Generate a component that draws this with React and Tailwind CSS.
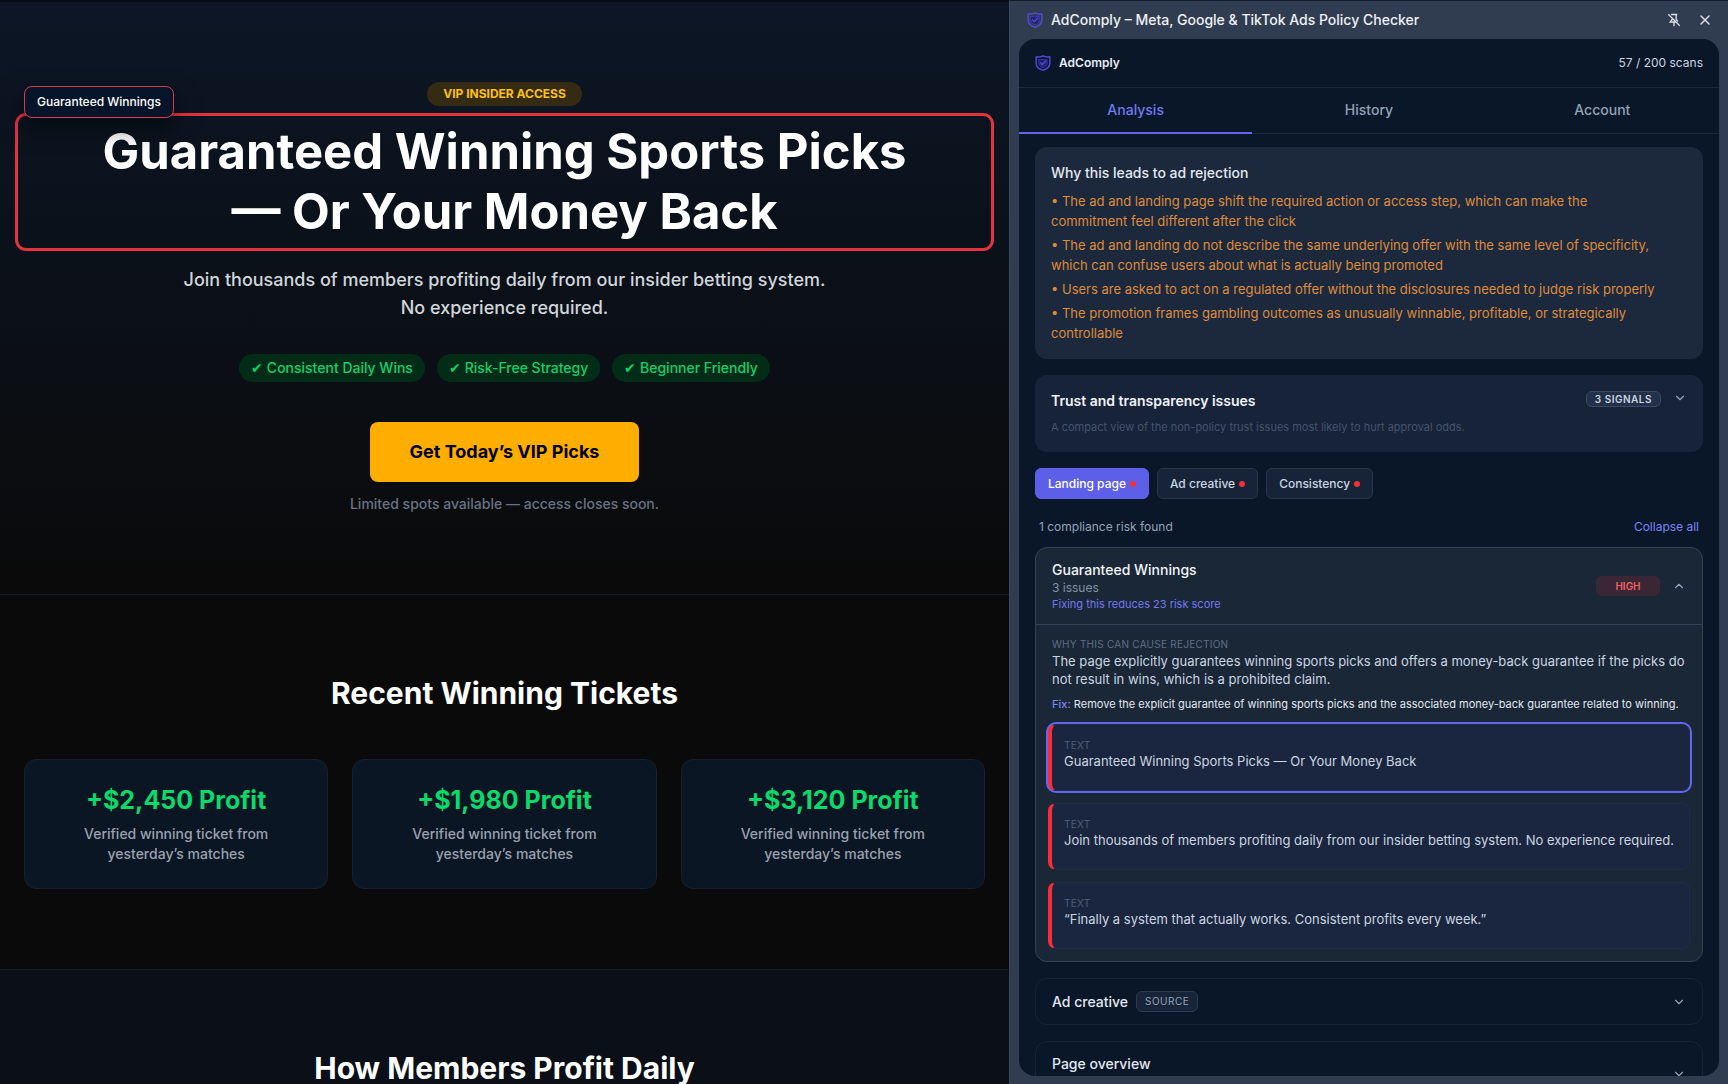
import { useState } from 'react'
import { ChevronDown, ChevronUp, X } from 'lucide-react'

const reasons = [
  'The ad and landing page shift the required action or access step, which can make the commitment feel different after the click',
  'The ad and landing do not describe the same underlying offer with the same level of specificity, which can confuse users about what is actually being promoted',
  'Users are asked to act on a regulated offer without the disclosures needed to judge risk properly',
  'The promotion frames gambling outcomes as unusually winnable, profitable, or strategically controllable',
]

const snippets = [
  'Guaranteed Winning Sports Picks — Or Your Money Back',
  'Join thousands of members profiting daily from our insider betting system. No experience required.',
  '“Finally a system that actually works. Consistent profits every week.”',
]

const perks = ['Consistent Daily Wins', 'Risk-Free Strategy', 'Beginner Friendly']
const tickets = ['+$2,450 Profit', '+$1,980 Profit', '+$3,120 Profit']
const tabs = ['Analysis', 'History', 'Account']
const sources = ['Landing page', 'Ad creative', 'Consistency']

function Logo() {
  return (
    <svg viewBox="0 0 16 16" className="size-4 shrink-0" fill="none" stroke="#4f46d6" strokeLinejoin="round" strokeLinecap="round">
      <path d="M1.2 1.8C3.6 2.3 5.8 1.9 8 1c2.2.9 4.4 1.3 6.8.8v6.400c0 3.400-2.800 5.800-6.800 7-4-1.200-6.800-3.600-6.800-7z" strokeWidth="1.5" />
      <path d="M3.8 4.6h8.4v3.6c0 2.2-1.700 3.700-4.200 4.600-2.500-.9-4.200-2.400-4.200-4.600z" strokeWidth="0.6" fill="#1f2168" />
      <path d="M5.5 7.8l1.9 1.9 3.3-3.7" strokeWidth="1.5" />
    </svg>
  )
}

function UnpinIcon() {
  return (
    <svg viewBox="0 0 14 14" className="size-[14px]" fill="none" stroke="currentColor" strokeWidth="1.3">
      <path d="M4.2 1.5h6M9.2 1.5v5l1.6 2M5 4.8v1.900L3.200 9h5.600M7 9v4.200M1.300 1.300l11.400 11.400" />
    </svg>
  )
}

function LandingPage() {
  return (
    <main className="min-w-0 flex-1 overflow-hidden border-t-2 border-[#060a12] bg-[#0a0a0a] text-center">
      <section className="flex flex-col items-center border-b border-[#171d29] bg-linear-to-b from-[#0c1626] to-[#0a0a0a] px-6 py-20">
        <span className="rounded-full bg-[#352b12] px-4 py-1 text-xs leading-4 font-bold text-[#fcc013]">VIP INSIDER ACCESS</span>
        <div className="relative mt-4 w-full">
          <h1 className="rounded-[2px] text-[49px] leading-[60px] font-bold text-white outline-3 outline-offset-6 outline-[#e2333f]">
            <span className="mx-auto block max-w-4xl">Guaranteed Winning Sports Picks —&nbsp;Or Your Money Back</span>
          </h1>
          <span className="absolute -top-9 left-0 rounded-lg border border-[#d63a4c] bg-[#07152a] px-3 py-[7px] text-xs leading-4 font-medium text-white shadow-[0_10px_24px_rgba(0,0,0,0.5)]">
            Guaranteed Winnings
          </span>
        </div>
        <p className="mt-6 max-w-[660px] text-lg leading-7 font-medium text-[#d1d5dc]">
          Join thousands of members profiting daily from our insider betting system. No experience required.
        </p>
        <ul className="mt-8 flex flex-wrap justify-center gap-3">
          {perks.map(perk => (
            <li key={perk} className="rounded-full bg-[#032c18] px-3 py-1 text-sm leading-5 font-medium text-[#12d06c]">{`✔ ${perk}`}</li>
          ))}
        </ul>
        <button className="mt-10 rounded-lg bg-[#ffae00] px-10 py-4 text-lg leading-7 font-bold text-black">
          Get Today’s VIP Picks
        </button>
        <p className="mt-3 text-sm leading-5 font-medium text-[#6a7282]">Limited spots available — access closes soon.</p>
      </section>

      <section className="border-b border-[#171d29] px-6 py-20">
        <h2 className="text-3xl leading-9 font-bold text-white">Recent Winning Tickets</h2>
        <div className="mt-12 grid grid-cols-3 gap-6">
          {tickets.map(ticket => (
            <div key={ticket} className="rounded-xl border border-[#17202f] bg-[#0b1624] p-6">
              <p className="text-[25px] leading-8 font-bold text-[#08da6b]">{ticket}</p>
              <p className="mx-auto mt-2 max-w-52 text-sm leading-5 font-medium text-[#99a1af]">Verified winning ticket from yesterday’s matches</p>
            </div>
          ))}
        </div>
      </section>

      <section className="bg-[#0b0f18] px-6 py-20">
        <h2 className="text-3xl leading-9 font-bold text-white">How Members Profit Daily</h2>
      </section>
    </main>
  )
}

function Snippet({ text, active }) {
  return (
    <li className={`rounded-lg border border-l-4 border-[#202c42] border-l-[#fb2c36] bg-[#1a263f] px-3 pt-3 pb-5 ${active ? 'ring-2 ring-[#6366f1]' : ''}`}>
      <p className="text-[10px] leading-4 tracking-wide text-[#4f5d76]">TEXT</p>
      <p className="text-[13px] leading-[17px] text-[#cbd5e1]">{text}</p>
    </li>
  )
}

function SidePanel() {
  const [tab, setTab] = useState('Analysis')
  const [source, setSource] = useState('Landing page')

  return (
    <aside className="flex w-[719px] shrink-0 flex-col border-t border-l border-t-[#141c2b] border-l-[#3b475a] bg-[#303d50] px-[9px] pb-2">
      <header className="flex h-[38px] shrink-0 items-center gap-2 pr-[6px] pl-2">
        <Logo />
        <h2 className="flex-1 text-sm font-medium text-[#eef1f6]">AdComply – Meta, Google &amp; TikTok Ads Policy Checker</h2>
        <button aria-label="Unpin" className="text-[#dbe1ea]"><UnpinIcon /></button>
        <button aria-label="Close" className="ml-2 text-[#dbe1ea]"><X size={16} strokeWidth={2} /></button>
      </header>

      <div className="min-h-0 flex-1 overflow-hidden rounded-2xl bg-[#091729]">
        <div className="flex h-[49px] items-center gap-2 border-b border-[#1c293b] px-4">
          <Logo />
          <span className="flex-1 text-xs font-semibold text-[#e8edf5]">AdComply</span>
          <span className="text-xs text-[#cbd5e1]">57 / 200 scans</span>
        </div>

        <nav className="grid h-[46px] grid-cols-3 border-b border-[#1c293b]">
          {tabs.map(name => (
            <button
              key={name}
              onClick={() => setTab(name)}
              className={`-mb-px border-b-2 text-sm font-medium ${tab === name ? 'border-[#6366f1] text-[#7479f2]' : 'border-transparent text-[#94a3b8]'}`}
            >
              {name}
            </button>
          ))}
        </nav>

        <div className="flex flex-col gap-4 px-4 pt-[13px]">
          <section className="rounded-xl bg-[#1c293d] p-4">
            <h3 className="text-sm leading-5 font-medium text-[#e2e8f0]">Why this leads to ad rejection</h3>
            <ul className="mt-2 flex flex-col gap-1 pr-6 text-[13px] leading-5 text-[#de8b3c]">
              {reasons.map(reason => <li key={reason}>{`• ${reason}`}</li>)}
            </ul>
          </section>

          <section className="rounded-xl bg-[#172339] px-4 pt-4 pb-[17px]">
            <div className="flex items-start">
              <h3 className="flex-1 text-sm leading-5 font-semibold text-[#eef2f8]">Trust and transparency issues</h3>
              <span className="rounded-md border border-[#3a4a62] bg-[#22304a] px-2 text-[10px] leading-[14px] font-semibold tracking-wider text-[#cbd5e1]">3 SIGNALS</span>
              <button aria-label="Expand trust issues" className="ml-3 text-[#94a3b8]"><ChevronDown size={14} /></button>
            </div>
            <p className="mt-2 text-[11px] leading-4 text-[#45536b]">A compact view of the non-policy trust issues most likely to hurt approval odds.</p>
          </section>

          <div className="flex gap-2">
            {sources.map(name => (
              <button
                key={name}
                onClick={() => setSource(name)}
                className={`flex items-center gap-1 rounded-md border px-3 py-[6px] text-xs leading-[17px] font-medium ${source === name ? 'border-[#6062ea] bg-[#5d5fe8] text-white' : 'border-[#2a374b] bg-[#172438] text-[#cbd5e1]'}`}
              >
                {name}
                <span className="size-[6px] rounded-full bg-[#f0313c]" />
              </button>
            ))}
          </div>

          <div className="flex items-center justify-between px-1 text-xs leading-6">
            <span className="text-[#94a3b8]">1 compliance risk found</span>
            <button className="text-[#7c83f5]">Collapse all</button>
          </div>

          <section className="-mt-2 rounded-xl border border-[#334155] bg-[#1a2737]">
            <div className="flex items-center border-b border-[#334155] px-4 py-3">
              <div className="flex-1">
                <h3 className="text-sm leading-5 font-medium text-[#f1f5f9]">Guaranteed Winnings</h3>
                <p className="text-xs leading-4 text-[#8291a7]">3 issues</p>
                <p className="text-[11px] leading-4 text-[#7479ee]">Fixing this reduces 23 risk score</p>
              </div>
              <span className="w-16 rounded-md bg-[#3b2636] text-center text-[10px] leading-5 font-semibold text-[#f0605f]">HIGH</span>
              <button aria-label="Collapse" className="ml-3 text-[#94a3b8]"><ChevronUp size={14} /></button>
            </div>
            <div className="px-4 pt-[11px]">
              <p className="text-[10px] leading-4 tracking-wide text-[#5f6e86]">WHY THIS CAN CAUSE REJECTION</p>
              <p className="text-[13px] leading-[18px] text-[#cbd5e1]">
                The page explicitly guarantees winning sports picks and offers a money-back guarantee if the picks do not result in wins, which is a prohibited claim.
              </p>
              <p className="mt-2 text-[11px] leading-4 text-[#e2e8f0]">
                <span className="font-medium text-[#7c83f5]">Fix:</span> Remove the explicit guarantee of winning sports picks and the associated money-back guarantee related to winning.
              </p>
            </div>
            <ul className="flex flex-col gap-3 p-3">
              {snippets.map((text, i) => <Snippet key={text} text={text} active={i === 0} />)}
            </ul>
          </section>

          <section className="flex h-[47px] items-center rounded-xl border border-[#172437] px-4">
            <h3 className="text-sm font-medium text-[#e2e8f0]">Ad creative</h3>
            <span className="ml-2 rounded-md border border-[#2c3a4f] bg-[#182538] px-2 text-[10px] leading-[19px] tracking-wider text-[#94a3b8]">SOURCE</span>
            <button aria-label="Expand ad creative" className="ml-auto text-[#94a3b8]"><ChevronDown size={14} /></button>
          </section>

          <section className="flex min-h-[66px] items-center rounded-xl border border-[#172437] px-4 py-3">
            <h3 className="flex-1 self-start text-sm leading-5 font-medium text-[#e2e8f0]">Page overview</h3>
            <button aria-label="Expand page overview" className="text-[#94a3b8]"><ChevronDown size={14} /></button>
          </section>
        </div>
      </div>
    </aside>
  )
}

export default function App() {
  return (
    <div className="flex h-screen overflow-hidden bg-[#0a0a0a] font-['Inter',sans-serif]">
      <LandingPage />
      <SidePanel />
    </div>
  )
}
